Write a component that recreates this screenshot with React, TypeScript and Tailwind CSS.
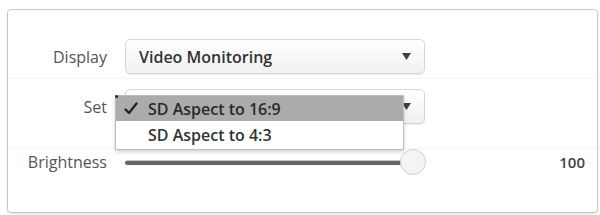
import React from 'react'

function Arrow() {
	return (
		<svg width="9" height="7" viewBox="0 0 9 7" className="shrink-0">
			<path d="M0 0 H9 L4.5 7 Z" fill="#3f3f3f" />
		</svg>
	)
}

function Check() {
	return (
		<svg width="14" height="13" viewBox="0 0 14 13" className="shrink-0">
			<path d="M1.5 7.5 L5 11 L12.5 1.5" fill="none" stroke="#222" strokeWidth="2.3" strokeLinecap="round" strokeLinejoin="round" />
		</svg>
	)
}

function Select({ value }: { value: string }) {
	return (
		<div className="flex h-[35px] w-[300px] items-center justify-between rounded-[5px] border border-[#d6d6d6] bg-gradient-to-b from-white to-[#f1f1f1] pl-[13px] pr-[13px] shadow-[0_1px_1px_rgba(0,0,0,0.08)]">
			<span className="text-[16px] font-semibold text-[#333]">{value}</span>
			<Arrow />
		</div>
	)
}

export default function App() {
	return (
		<div className="h-[215px] w-[600px] bg-white pl-[7px] pt-[9px] font-['Open_Sans',sans-serif]">
			<div className="relative h-[204px] w-[591px] rounded-[4px] border border-[#c9c9c9] bg-white pt-[29px] shadow-[0_1px_2px_rgba(0,0,0,0.12)]">
				<div className="flex items-center border-b border-[#f6f6f6] pb-[4px]">
					<div className="w-[99px] text-right text-[16px] text-[#555]">Display</div>
					<div className="ml-[18px]">
						<Select value="Video Monitoring" />
					</div>
				</div>

				<div className="mt-[10px] flex items-center">
					<div className="w-[99px] text-right text-[16px] text-[#555]">Set</div>
					<div className="ml-[18px]">
						<Select value="" />
					</div>
				</div>

				<div className="mt-[24px] flex items-center border-t border-[#f4f4f4]">
					<div className="w-[99px] text-right text-[16px] text-[#555]">Brightness</div>
					<div className="ml-[18px] flex w-[301px] items-center">
						<div className="h-[5px] flex-1 rounded-full border-t border-[#c4c4c4] bg-[#666]" />
						<div className="-ml-[2px] h-[26px] w-[26px] rounded-full border border-[#cfcfcf] bg-[#f4f4f4]" />
					</div>
					<div className="ml-auto pr-[12px] text-[15px] font-semibold text-[#444]">100</div>
				</div>

				{/* open menu of the Set dropdown */}
				<div className="absolute left-[107px] top-[85px] w-[289px] border border-[#bdbdbd] bg-white shadow-[0_2px_4px_rgba(0,0,0,0.18)]">
					<div className="absolute -left-[1px] -top-[1px] h-[3px] w-[3px] rounded-full bg-[#222]" />
					<div className="flex h-[25px] items-center bg-[#ababab] pl-[8px]">
						<span className="w-[24px]">
							<Check />
						</span>
						<span className="text-[16px] font-semibold text-[#2a2a2a]">SD Aspect to 16:9</span>
					</div>
					<div className="flex h-[28px] items-center pl-[32px]">
						<span className="text-[16px] font-semibold text-[#333]">SD Aspect to 4:3</span>
					</div>
				</div>
			</div>
		</div>
	)
}
